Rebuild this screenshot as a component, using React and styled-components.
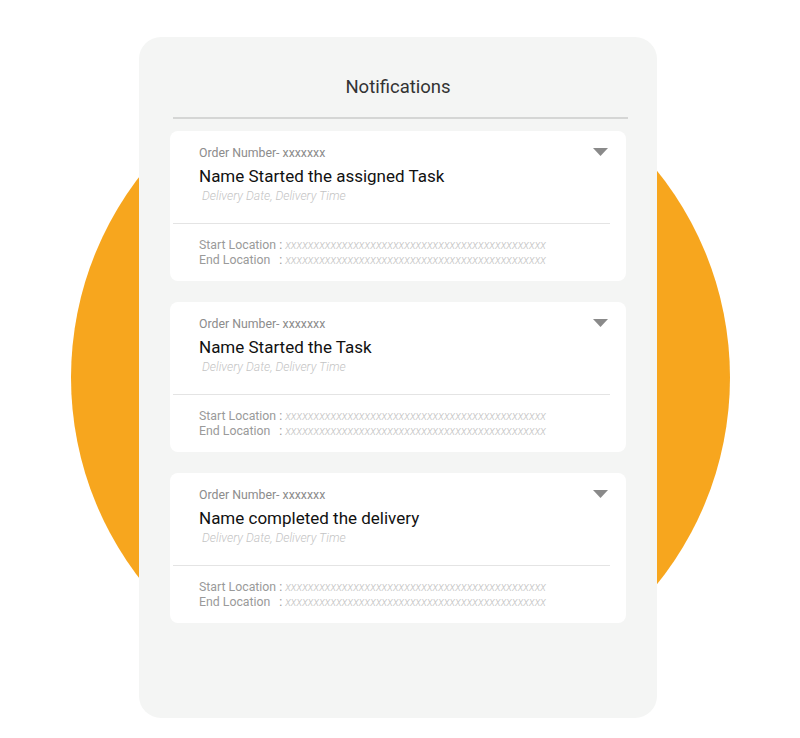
import styled, { createGlobalStyle } from "styled-components";

const GlobalStyle = createGlobalStyle`
  body {
    margin: 0;
    background: #ffffff;
    font-family: Roboto, "Liberation Sans", sans-serif;
  }
`;

const Stage = styled.div`
  position: relative;
  width: 800px;
  height: 738px;
  overflow: hidden;
  padding-top: 37px;
  box-sizing: border-box;
`;

const Circle = styled.div`
  position: absolute;
  left: 71px;
  top: 48px;
  width: 659px;
  height: 659px;
  border-radius: 50%;
  background: #f7a61e;
`;

const Panel = styled.div`
  position: relative;
  width: 518px;
  height: 681px;
  margin-left: 139px;
  box-sizing: border-box;
  padding: 38px 31px 0;
  border-radius: 22px;
  background: #f4f5f4;
`;

const Title = styled.h1`
  margin: 0;
  font-size: 18.5px;
  line-height: 24px;
  font-weight: 400;
  color: #333333;
  text-align: center;
`;

const TitleRule = styled.div`
  height: 2px;
  margin: 18px -2px 12px 3px;
  background: #d5d6d5;
`;

const List = styled.div`
  display: flex;
  flex-direction: column;
  gap: 21px;
`;

const Card = styled.div`
  height: 150px;
  box-sizing: border-box;
  padding-top: 14px;
  border-radius: 8px;
  background: #ffffff;
`;

const Head = styled.div`
  display: flex;
  justify-content: space-between;
  align-items: flex-start;
  padding: 0 18px 0 29px;
`;

const Order = styled.div`
  font-size: 12.3px;
  line-height: 16px;
  color: #8c8c8c;
`;

const Name = styled.div`
  margin-top: 5px;
  font-size: 17px;
  line-height: 20px;
  color: #111111;
`;

const When = styled.div`
  margin: 2px 0 0 3px;
  font-size: 12.3px;
  line-height: 16px;
  font-style: italic;
  font-weight: 300;
  color: #c4c4c4;
`;

const Arrow = styled.svg`
  margin-top: 3px;
  flex: none;
`;

const Rule = styled.div`
  height: 1px;
  margin: 19px 16px 0 3px;
  background: #e4e4e4;
`;

const Places = styled.div`
  display: grid;
  grid-template-columns: auto auto 1fr;
  column-gap: 3px;
  margin-top: 14px;
  padding-left: 29px;
  font-size: 12.3px;
  line-height: 15px;
`;

const Label = styled.span`
  color: #9a9a9a;
`;

const Value = styled.span`
  font-size: 12px;
  font-style: italic;
  font-weight: 300;
  color: #c4c4c4;
  white-space: nowrap;
`;

const filler = "x".repeat(46);

const items = [
  "Name Started the assigned Task",
  "Name Started the Task",
  "Name completed the delivery",
];

function NotificationCard({ name }) {
  return (
    <Card>
      <Head>
        <div>
          <Order>Order Number- xxxxxxx</Order>
          <Name>{name}</Name>
          <When>Delivery Date, Delivery Time</When>
        </div>
        <Arrow width="15" height="8" viewBox="0 0 15 8">
          <path d="M0 0 H15 L7.5 8 Z" fill="#8a8a8a" />
        </Arrow>
      </Head>
      <Rule />
      <Places>
        <Label>Start Location</Label>
        <Label>:</Label>
        <Value>{filler}</Value>
        <Label>End Location</Label>
        <Label>:</Label>
        <Value>{filler}</Value>
      </Places>
    </Card>
  );
}

export default function App() {
  return (
    <>
      <GlobalStyle />
      <Stage>
        <Circle />
        <Panel>
          <Title>Notifications</Title>
          <TitleRule />
          <List>
            {items.map((n) => (
              <NotificationCard key={n} name={n} />
            ))}
          </List>
        </Panel>
      </Stage>
    </>
  );
}
